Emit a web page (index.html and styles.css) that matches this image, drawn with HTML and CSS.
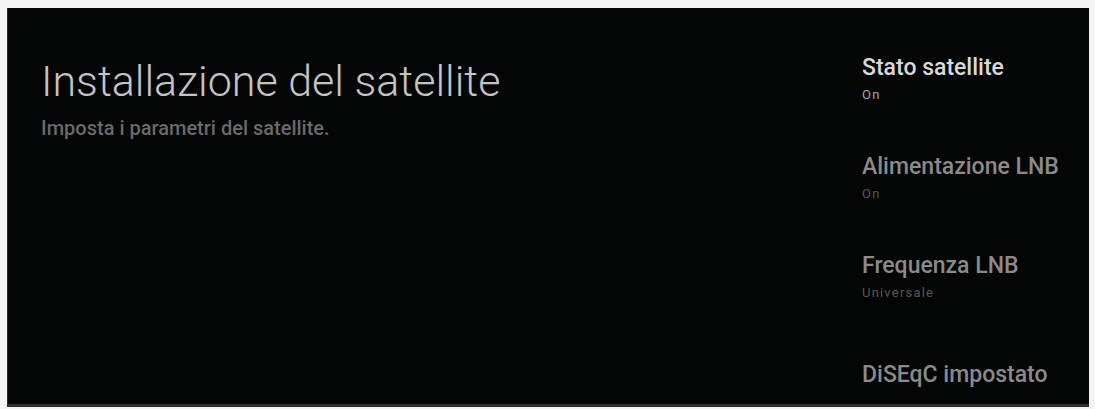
FILE: index.html
```html
<!DOCTYPE html>
<html lang="it">
<head>
    <meta charset="UTF-8">
    <meta name="viewport" content="width=device-width, initial-scale=1.0">
    <title>Installazione del satellite</title>
    <link rel="stylesheet" href="styles.css">
</head>
<body>
    <div class="screen">
        <div class="intro">
            <h1>Installazione del satellite</h1>
            <p class="description">Imposta i parametri del satellite.</p>
        </div>

        <ul class="options">
            <li class="option focused">
                <span class="option-title">Stato satellite</span>
                <span class="option-value">On</span>
            </li>
            <li class="option">
                <span class="option-title">Alimentazione LNB</span>
                <span class="option-value">On</span>
            </li>
            <li class="option">
                <span class="option-title">Frequenza LNB</span>
                <span class="option-value">Universale</span>
            </li>
            <li class="option">
                <span class="option-title">DiSEqC impostato</span>
            </li>
        </ul>
    </div>
</body>
</html>
```

FILE: styles.css
```css
body {
    margin: 0;
    background: #f4f4f4;
    font-family: Roboto, 'Noto Sans', sans-serif;
}

.screen {
    margin: 8px 6px 0 7px;
    height: 396px;
    background: #040505;
    border-left: 1px solid #2a2a2a;
    border-bottom: 3px solid #2e2e2e;
    display: flex;
    justify-content: space-between;
    overflow: hidden;
}

.intro {
    padding: 48px 0 0 33px;
}

h1 {
    margin: 0;
    font-size: 43px;
    line-height: 50px;
    font-weight: 300;
    color: #c4c4c4;
}

.description {
    margin: 10px 0 0;
    font-size: 20px;
    line-height: 24px;
    font-weight: 500;
    color: #6a6a6a;
}

.options {
    list-style: none;
    margin: 0;
    padding: 46px 0 0;
    width: 227px;
    display: flex;
    flex-direction: column;
    gap: 50px;
}

.option {
    display: flex;
    flex-direction: column;
}

/* the last row sits a little lower, its value is cut off below */
.option:last-child {
    margin-top: 10px;
}

.option-title {
    font-size: 23px;
    line-height: 28px;
    font-weight: 500;
    color: #8a8a8a;
}

.option-value {
    margin-top: 5px;
    font-size: 13px;
    line-height: 16px;
    letter-spacing: 1.2px;
    color: #585858;
}

.focused .option-title {
    color: #d8d8d8;
}

.focused .option-value {
    color: #a8a8a8;
}
```
